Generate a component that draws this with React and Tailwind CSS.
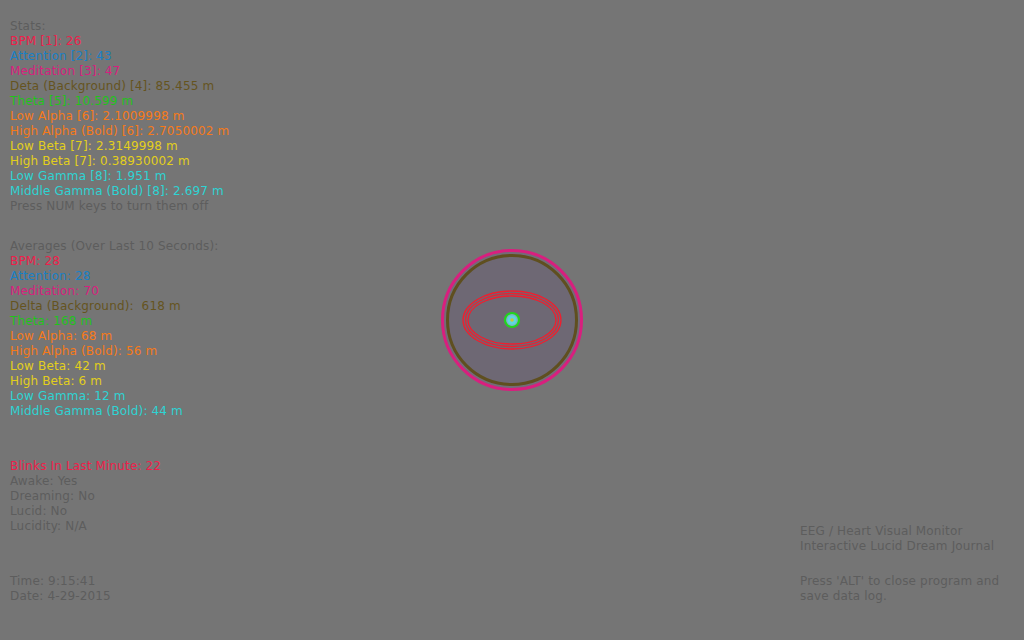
import React from "react";

const stats = [
  ["BPM [1]: 26", "text-[#ee1f4b]"],
  ["Attention [2]: 43", "text-[#1a80c4]"],
  ["Meditation [3]: 47", "text-[#d81f7e]"],
  ["Deta (Background) [4]: 85.455 m", "text-[#65541f]"],
  ["Theta [5]: 10.599 m", "text-[#22c21c]"],
  ["Low Alpha [6]: 2.1009998 m", "text-[#f57a1a]"],
  ["High Alpha (Bold) [6]: 2.7050002 m", "text-[#f57a1a]"],
  ["Low Beta [7]: 2.3149998 m", "text-[#e3cf1c]"],
  ["High Beta [7]: 0.38930002 m", "text-[#e3cf1c]"],
  ["Low Gamma [8]: 1.951 m", "text-[#2ed3d3]"],
  ["Middle Gamma (Bold) [8]: 2.697 m", "text-[#2ed3d3]"],
];

const averages = [
  ["BPM: 28", "text-[#ee1f4b]"],
  ["Attention: 28", "text-[#1a80c4]"],
  ["Meditation: 70", "text-[#d81f7e]"],
  ["Delta (Background):  618 m", "text-[#65541f]"],
  ["Theta: 168 m", "text-[#22c21c]"],
  ["Low Alpha: 68 m", "text-[#f57a1a]"],
  ["High Alpha (Bold): 56 m", "text-[#f57a1a]"],
  ["Low Beta: 42 m", "text-[#e3cf1c]"],
  ["High Beta: 6 m", "text-[#e3cf1c]"],
  ["Low Gamma: 12 m", "text-[#2ed3d3]"],
  ["Middle Gamma (Bold): 44 m", "text-[#2ed3d3]"],
];

const Line = ({ children, className = "text-[#5d5d5d]" }) => (
  <div className={`h-[15px] leading-[15px] whitespace-pre ${className}`}>{children}</div>
);

const Orb = () => (
  <svg width="150" height="150" viewBox="-75 -75 150 150">
    <circle r="69.5" fill="#736b78" stroke="#d81f7e" strokeWidth="3" />
    <circle r="64.5" fill="#6e6874" stroke="#5f4f1f" strokeWidth="3" />
    <ellipse rx="49" ry="29" fill="none" stroke="#ee1f2f" strokeWidth="1.3" />
    <ellipse rx="46.5" ry="26.5" fill="none" stroke="#ee1f2f" strokeWidth="1.3" />
    <ellipse rx="44" ry="24" fill="none" stroke="#ee1f2f" strokeWidth="1.3" />
    <circle r="7" fill="#7ab8c8" stroke="#22d41c" strokeWidth="2.2" />
    <circle r="4.5" fill="#5ed8e0" />
    <circle r="1.8" fill="#c8c838" />
  </svg>
);

export default function App() {
  return (
    <div className="relative w-[1024px] h-[640px] bg-[#757575] overflow-hidden font-['DejaVu_Sans',sans-serif] text-[12px] tracking-[0.15px] flex justify-between px-[10px] pt-[19px]">
      <div className="flex flex-col">
        <Line>Stats:</Line>
        {stats.map(([t, c]) => (
          <Line key={t} className={c}>{t}</Line>
        ))}
        <Line>Press NUM keys to turn them off</Line>
        <div className="h-[25px]" />
        <Line>Averages (Over Last 10 Seconds):</Line>
        {averages.map(([t, c]) => (
          <Line key={t} className={c}>{t}</Line>
        ))}
        <div className="h-[40px]" />
        <Line className="text-[#ee1f4b]">Blinks In Last Minute: 22</Line>
        <Line>Awake: Yes</Line>
        <Line>Dreaming: No</Line>
        <Line>Lucid: No</Line>
        <Line>Lucidity: N/A</Line>
        <div className="h-[40px]" />
        <Line>Time: 9:15:41</Line>
        <Line>Date: 4-29-2015</Line>
      </div>
      <div className="flex flex-col pt-[505px] w-[214px]">
        <Line>EEG / Heart Visual Monitor</Line>
        <Line>Interactive Lucid Dream Journal</Line>
        <div className="h-[20px]" />
        <Line>Press 'ALT' to close program and</Line>
        <Line>save data log.</Line>
      </div>
      <div className="absolute left-[437px] top-[245px]">
        <Orb />
      </div>
    </div>
  );
}
